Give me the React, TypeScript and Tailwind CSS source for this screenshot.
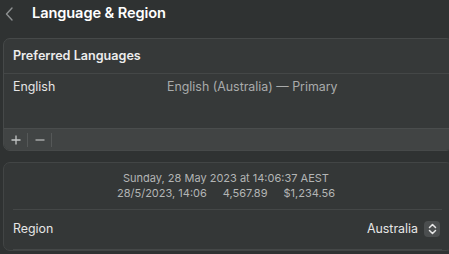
import React from "react"

function Stepper() {
    return (
        <div className="flex h-[16px] w-[16px] items-center justify-center rounded-[4px] bg-[#4b4e4f]">
            <svg width="9" height="12" viewBox="0 0 9 12" fill="none" stroke="#e6e6e6" strokeWidth="1.5" strokeLinecap="round" strokeLinejoin="round">
                <path d="M1.5 4.5 L4.5 1.5 L7.5 4.5" />
                <path d="M1.5 7.5 L4.5 10.5 L7.5 7.5" />
            </svg>
        </div>
    )
}

export default function App() {
    return (
        <div className="h-[254px] w-[449px] overflow-hidden bg-[#2f3232] text-[#e8e8e8]" style={{ fontFamily: "Inter, 'Noto Sans', sans-serif" }}>
            {/* Title bar */}
            <div className="flex h-[27px] items-center">
                <svg className="ml-[5px]" width="9" height="14" viewBox="0 0 9 14" fill="none" stroke="#8e9192" strokeWidth="1.4" strokeLinecap="round" strokeLinejoin="round">
                    <path d="M7 1 L1.5 7 L7 13" />
                </svg>
                <span className="ml-[18px] text-[14.6px] font-semibold tracking-[-0.1px] text-white">Language &amp; Region</span>
            </div>

            {/* Preferred Languages */}
            <div className="ml-[3px] mt-[11px] w-[450px] overflow-hidden rounded-[7px] border border-[#464949] bg-[#363939]">
                <div className="flex h-[34px] items-center px-[9px] text-[12.6px] font-semibold text-[#ececec]">Preferred Languages</div>
                <div className="h-px bg-[#444747]" />
                <div className="flex h-[54px] items-start pt-[4px] text-[12.4px]">
                    <span className="ml-[9px] w-[154px] text-[#e6e6e6]">English</span>
                    <span className="text-[#a9abab]">English (Australia) — Primary</span>
                </div>
                <div className="flex h-[22px] items-center border-t border-[#4a4d4d] bg-[#414444]">
                    <div className="flex w-[23px] justify-center">
                        <svg width="10" height="10" viewBox="0 0 10 10" stroke="#c4c6c6" strokeWidth="1.3">
                            <path d="M5 0.5 V9.5 M0.5 5 H9.5" />
                        </svg>
                    </div>
                    <div className="h-[14px] w-px bg-[#555858]" />
                    <div className="flex w-[23px] justify-center">
                        <svg width="10" height="10" viewBox="0 0 10 10" stroke="#a4a6a6" strokeWidth="1.3">
                            <path d="M0.5 5 H9.5" />
                        </svg>
                    </div>
                    <div className="h-[14px] w-px bg-[#555858]" />
                </div>
            </div>

            {/* Region */}
            <div className="ml-[3px] mt-[11px] w-[450px] rounded-[7px] border border-[#424545] bg-[#343737]">
                <div className="flex flex-col items-center pt-[8px] pr-[4px] text-[11px] leading-[14.5px] text-[#b3b5b5]">
                    <span>Sunday, 28 May 2023 at 14:06:37 AEST</span>
                    <div className="flex gap-[16px]">
                        <span>28/5/2023, 14:06</span>
                        <span>4,567.89</span>
                        <span>$1,234.56</span>
                    </div>
                </div>
                <div className="ml-[9px] mr-[10px] mt-[9px] h-px bg-[#444747]" />
                <div className="flex h-[39px] items-center justify-between pl-[9px] pr-[12px] text-[12.4px]">
                    <span className="text-[#e6e6e6]">Region</span>
                    <div className="flex items-center gap-[6px]">
                        <span className="text-[#e6e6e6]">Australia</span>
                        <Stepper />
                    </div>
                </div>
                <div className="ml-[9px] mr-[10px] h-px bg-[#444747]" />
            </div>
        </div>
    )
}
